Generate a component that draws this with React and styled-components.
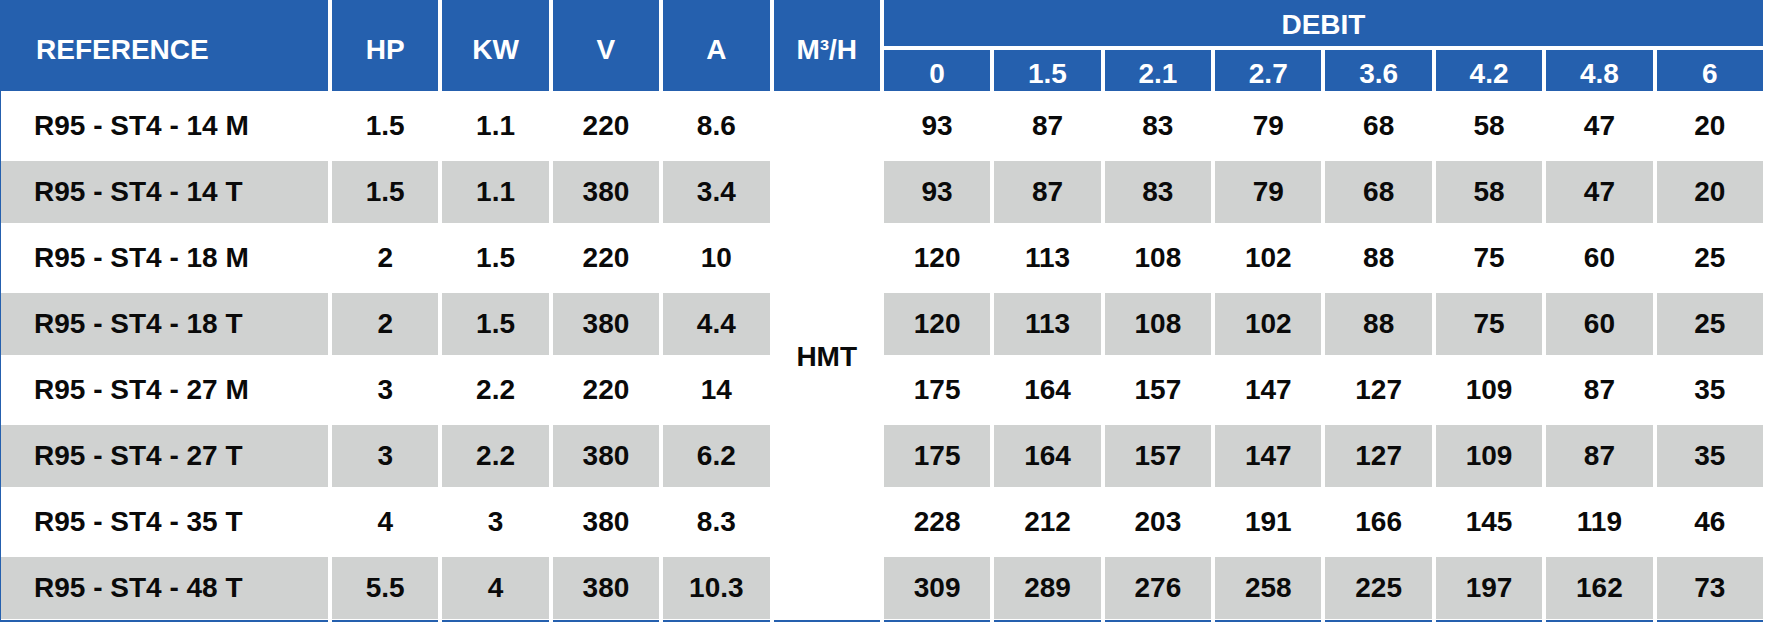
import React from 'react';
import styled, { createGlobalStyle } from 'styled-components';

const BLUE = '#2560ae';
const GRAY = '#d0d2d1';

// --- Global Styles ---
const GlobalStyle = createGlobalStyle`
  html, body, #root {
    margin: 0;
    padding: 0;
    background: #fff;
  }
  body {
    font-family: 'Liberation Sans', Arial, sans-serif;
  }
`;

// --- Styled Components ---
const Frame = styled.div`
  width: 1767px;
  height: 622px;
  box-sizing: border-box;
  border-left: 1px solid ${BLUE};
  overflow: hidden;
`;

const Grid = styled.div`
  display: grid;
  width: 1762px;
  grid-template-columns: 327px repeat(13, 1fr);
  grid-template-rows: 46px 41px repeat(8, 62px);
  column-gap: 4px;
  row-gap: 4px;
`;

const HeadCell = styled.div`
  grid-column: ${(p) => p.$col};
  grid-row: ${(p) => p.$row};
  background: ${BLUE};
  color: #fff;
  font-size: 28px;
  font-weight: 700;
  display: flex;
  align-items: center;
  justify-content: ${(p) => (p.$left ? 'flex-start' : 'center')};
  padding-left: ${(p) => (p.$left ? '35px' : '0')};
  padding-top: ${(p) => p.$nudge || 0}px;
  box-sizing: border-box;
  white-space: nowrap;
`;

const BodyCell = styled.div`
  background: ${(p) => (p.$shaded ? GRAY : '#fff')};
  color: #0a0a0a;
  font-size: 28px;
  font-weight: 700;
  display: flex;
  align-items: center;
  justify-content: ${(p) => (p.$left ? 'flex-start' : 'center')};
  padding-left: ${(p) => (p.$left ? '33px' : '0')};
  box-sizing: border-box;
  white-space: nowrap;
`;

const HmtCell = styled(BodyCell)`
  grid-column: 6;
  grid-row: 3 / span 8;
`;

const Strip = styled.div`
  display: grid;
  width: 1762px;
  margin-top: 1px;
  height: 2px;
  grid-template-columns: 327px repeat(13, 1fr);
  column-gap: 4px;
`;

const StripCell = styled.div`
  background: ${BLUE};
`;

// --- Data ---
const mainHeads = ['HP', 'KW', 'V', 'A', 'M³/H'];
const debits = ['0', '1.5', '2.1', '2.7', '3.6', '4.2', '4.8', '6'];

const rows = [
  ['R95 - ST4 - 14 M', '1.5', '1.1', '220', '8.6', [93, 87, 83, 79, 68, 58, 47, 20]],
  ['R95 - ST4 - 14 T', '1.5', '1.1', '380', '3.4', [93, 87, 83, 79, 68, 58, 47, 20]],
  ['R95 - ST4 - 18 M', '2', '1.5', '220', '10', [120, 113, 108, 102, 88, 75, 60, 25]],
  ['R95 - ST4 - 18 T', '2', '1.5', '380', '4.4', [120, 113, 108, 102, 88, 75, 60, 25]],
  ['R95 - ST4 - 27 M', '3', '2.2', '220', '14', [175, 164, 157, 147, 127, 109, 87, 35]],
  ['R95 - ST4 - 27 T', '3', '2.2', '380', '6.2', [175, 164, 157, 147, 127, 109, 87, 35]],
  ['R95 - ST4 - 35 T', '4', '3', '380', '8.3', [228, 212, 203, 191, 166, 145, 119, 46]],
  ['R95 - ST4 - 48 T', '5.5', '4', '380', '10.3', [309, 289, 276, 258, 225, 197, 162, 73]],
];

// --- Main Component ---
export default function App() {
  return (
    <>
      <GlobalStyle />
      <Frame>
        <Grid>
          <HeadCell $col="1" $row="1 / span 2" $left $nudge={8}>
            REFERENCE
          </HeadCell>
          {mainHeads.map((h, i) => (
            <HeadCell key={h} $col={String(i + 2)} $row="1 / span 2" $nudge={8}>
              {h}
            </HeadCell>
          ))}
          <HeadCell $col="7 / span 8" $row="1" $nudge={3}>
            DEBIT
          </HeadCell>
          {debits.map((d, i) => (
            <HeadCell key={d} $col={String(i + 7)} $row="2" $nudge={6}>
              {d}
            </HeadCell>
          ))}

          <HmtCell>HMT</HmtCell>

          {rows.map(([ref, hp, kw, v, a, vals], r) => {
            const shaded = r % 2 === 1;
            return (
              <React.Fragment key={ref}>
                <BodyCell $shaded={shaded} $left>{ref}</BodyCell>
                <BodyCell $shaded={shaded}>{hp}</BodyCell>
                <BodyCell $shaded={shaded}>{kw}</BodyCell>
                <BodyCell $shaded={shaded}>{v}</BodyCell>
                <BodyCell $shaded={shaded}>{a}</BodyCell>
                {vals.map((n, i) => (
                  <BodyCell key={i} $shaded={shaded}>{n}</BodyCell>
                ))}
              </React.Fragment>
            );
          })}
        </Grid>
        <Strip>
          {Array.from({ length: 14 }).map((_, i) => (
            <StripCell key={i} />
          ))}
        </Strip>
      </Frame>
    </>
  );
}
